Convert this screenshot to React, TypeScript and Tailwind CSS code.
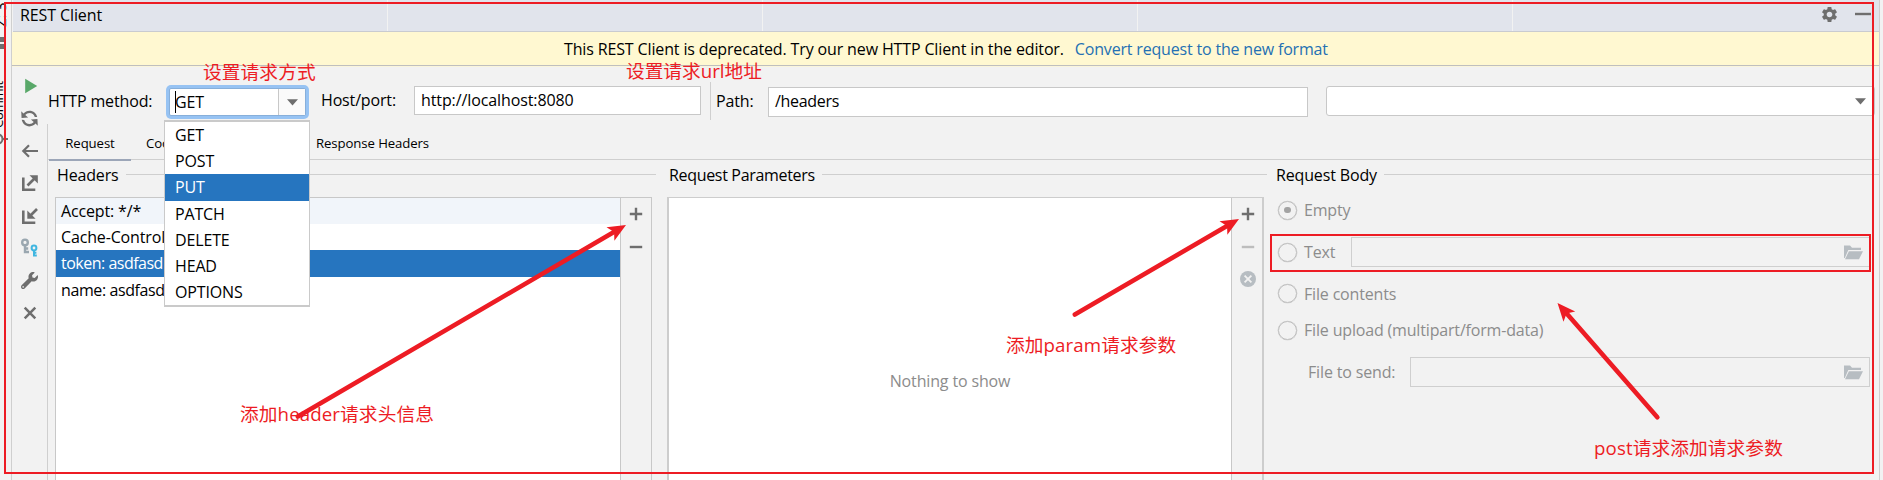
import type { ReactNode } from 'react';
import { MdSettings } from 'react-icons/md';
import { FaWrench } from 'react-icons/fa';

const METHODS = ['GET', 'POST', 'PUT', 'PATCH', 'DELETE', 'HEAD', 'OPTIONS'];

const HEADER_ROWS = [
  { text: 'Accept: */*', style: 'h-[26px] bg-[#f1f5fa]' },
  { text: 'Cache-Control', style: 'h-[26px]' },
  { text: 'token: asdfasd', style: 'h-[27px] bg-[#2675bf] pb-[2px] text-white tracking-[-0.5px]' },
  { text: 'name: asdfasd', style: 'h-[27px] pb-px tracking-[-0.4px]' },
];

function Arrow({ className = '' }: { className?: string }) {
  return (
    <svg className={`shrink-0 ${className}`} width="11" height="7" viewBox="0 0 11 7">
      <path d="M0 .3h11L5.5 6.6z" fill="#6e6e6e" />
    </svg>
  );
}

function ToolIcon({ children }: { children: ReactNode }) {
  return <div className="flex h-[32.5px] items-center justify-center">{children}</div>;
}

function Toolbar() {
  return (
    <div className="flex w-[35px] shrink-0 flex-col pt-[2.5px]">
      <ToolIcon>
        <svg width="20" height="20" viewBox="0 0 20 20"><path d="M5.2 2.8 17.2 10 5.2 17.2z" fill="#59a869" /></svg>
      </ToolIcon>
      <ToolIcon>
        <svg width="21" height="21" viewBox="0 0 16 16">
          <path
            fill="#6e6e6e"
            d="M12.57 11.89C11.47 13.18 9.83 14 8 14C5.04 14 2.58 11.86 2.09 9.04L3.95 9.11C4.43 10.89 6.06 12.2 8 12.2C9.3 12.2 10.46 11.61 11.23 10.68L9.05 8.71L14.04 8.45L14.3 13.44ZM3.43 4.12C4.53 2.82 6.17 2 8 2C10.92 2 13.35 4.09 13.89 6.85L12.02 6.79C11.5 5.06 9.9 3.8 8 3.8C6.7 3.8 5.54 4.39 4.77 5.32L6.95 7.29L1.96 7.55L1.7 2.56Z"
          />
        </svg>
      </ToolIcon>
      <ToolIcon>
        <svg width="20" height="20" viewBox="0 0 20 20" fill="none" stroke="#6e6e6e" strokeWidth="2.2">
          <path d="M18 10H3.5M9 4.3 3.3 10 9 15.7" />
        </svg>
      </ToolIcon>
      <ToolIcon>
        <svg width="20" height="20" viewBox="0 0 20 20" fill="none" stroke="#6e6e6e">
          <path d="M3.3 4.5v12.2h12" strokeWidth="2.6" />
          <path d="M7.5 12.5 15 5" strokeWidth="2.6" />
          <path d="M9.5 2.2h8.3v8.3z" fill="#6e6e6e" stroke="none" />
        </svg>
      </ToolIcon>
      <ToolIcon>
        <svg width="20" height="20" viewBox="0 0 20 20" fill="none" stroke="#6e6e6e">
          <path d="M3.3 4.5v12.2h12" strokeWidth="2.6" />
          <path d="M10 10 17 3" strokeWidth="2.6" />
          <path d="M7.3 4.5v8.3h8.3z" fill="#6e6e6e" stroke="none" />
        </svg>
      </ToolIcon>
      <ToolIcon>
        <svg width="20" height="20" viewBox="0 0 20 20" fill="none">
          <g stroke="#9aa7b0" strokeWidth="2.4">
            <circle cx="5" cy="4.4" r="2.8" />
            <path d="M5 7.2v8M5 10.5h3.2M5 14h4" />
          </g>
          <g stroke="#40b6e0" strokeWidth="2">
            <circle cx="14" cy="10" r="2.4" />
            <path d="M14 12.5v6M14 14.7h2.4M14 17.6h2.8" />
          </g>
        </svg>
      </ToolIcon>
      <ToolIcon>
        <FaWrench size={17} color="#6e6e6e" />
      </ToolIcon>
      <ToolIcon>
        <svg width="20" height="20" viewBox="0 0 20 20" fill="none" stroke="#6e6e6e" strokeWidth="2.5">
          <path d="M4.7 4.7 15.3 15.3M15.3 4.7 4.7 15.3" />
        </svg>
      </ToolIcon>
    </div>
  );
}

function Plus() {
  return (
    <svg width="14" height="14" viewBox="0 0 14 14" stroke="#6e6e6e" strokeWidth="2.4">
      <path d="M7 .8v12.4M.8 7h12.4" />
    </svg>
  );
}

function Minus({ color }: { color: string }) {
  return <svg width="14" height="14" viewBox="0 0 14 14"><path d="M.8 7h12.4" stroke={color} strokeWidth="2.4" /></svg>;
}

function GroupTitle({ title, className }: { title: string; className: string }) {
  return (
    <div className={`flex h-[30px] items-center ${className}`}>
      <span>{title}</span>
      <div className="mb-[1px] ml-[7px] h-px flex-1 bg-[#cfcfcf]" />
    </div>
  );
}

function Radio({ label, checked = false }: { label: string; checked?: boolean }) {
  return (
    <div className="flex items-center">
      <div className="flex size-[19px] shrink-0 items-center justify-center rounded-full border border-[#bdbdbd] ring-[0.3px] ring-[#c4c4c4]">
        {checked && <div className="size-[6.5px] rounded-full bg-[#a3a3a3]" />}
      </div>
      <span className="ml-[7px] tracking-[-0.17px]">{label}</span>
    </div>
  );
}

function FolderField({ className }: { className: string }) {
  return (
    <div className={`flex items-center justify-end border border-[#cfcfcf] pr-[6px] ${className}`}>
      <svg width="19" height="15" viewBox="0 0 19 15" fill="#b7bdc2">
        <path d="M0 13V.5h6l2 2.3h9V5H4.3L.8 13z" />
        <path d="M4.9 6.3H19L15 14.3H1z" />
      </svg>
    </div>
  );
}

function MethodCombo() {
  return (
    <div className="relative h-[34px] w-[143px] shrink-0 rounded-[5px] bg-[#97c3f3] p-[3px]">
      <div className="flex h-full rounded-[2px] border border-[#87afda] bg-white">
        <div className="flex flex-1 items-center pl-[5px]">
          <div className="h-[22px] w-px bg-black" />
          <span className="-ml-px">GET</span>
        </div>
        <div className="flex w-[27px] items-center border-l border-[#c8c8c8] bg-[#fafafa] pl-[8px]">
          <Arrow />
        </div>
      </div>
      <div className="absolute top-[35px] -left-[2px] z-10 w-[146px] border border-y-2 border-[#cacaca] bg-white">
        {METHODS.map((m) => (
          <div
            key={m}
            className={`flex h-[26.2px] items-center pl-[10px] ${m === 'PUT' ? 'bg-[#2675bf] text-white' : ''}`}
          >
            {m}
          </div>
        ))}
      </div>
    </div>
  );
}

function RequestBar() {
  return (
    <div className="flex h-[57px] items-start pt-[18px]">
      <div className="flex h-[32px] w-[119px] shrink-0 items-center pl-px">HTTP method:</div>
      <MethodCombo />
      <div className="flex h-[29px] w-[105px] shrink-0 items-center pl-[12px]">Host/port:</div>
      <div className="mt-px flex h-[29px] w-[287px] shrink-0 items-center border border-[#c8c8c8] bg-white pb-px pl-[6px] tracking-[-0.1px]">
        http://localhost:8080
      </div>
      <div className="-mt-[3px] ml-[9px] h-[38px] w-px bg-[#cfcfcf]" />
      <div className="flex h-[32px] w-[57px] shrink-0 items-center pl-[5px]">Path:</div>
      <div className="mt-[2px] flex h-[30px] w-[540px] shrink-0 items-center border border-[#c8c8c8] bg-white pb-[2px] pl-[6px] tracking-[-0.3px]">
        /headers
      </div>
      <div className="mt-px ml-[18px] flex h-[30px] w-[549px] shrink-0 items-center justify-end rounded-[3px] border border-[#c8c8c8] bg-white pr-[8px]">
        <Arrow />
      </div>
    </div>
  );
}

function Tabs() {
  return (
    <div className="flex h-[36px] border-b border-[#cfcfcf] pl-px text-[13.2px] tracking-[-0.1px]">
      <div className="relative flex h-[37px] w-[82px] items-center justify-center pt-px">
        Request
        <div className="absolute inset-x-0 bottom-0 h-[2px] bg-[#9ca6b8]" />
      </div>
      {/* The open method list covers the tabs between "Coo" and "Response Headers". */}
      <div className="flex h-[38px] w-[82px] shrink-0 items-center pl-[15px]">Coo</div>
      <div className="flex h-[38px] w-[88px] shrink-0" />
      <div className="flex h-[38px] w-[144px] shrink-0 items-center pl-[15px]">Response Headers</div>
    </div>
  );
}

function Panels() {
  return (
    <div className="flex flex-1">
      <div className="flex w-[619px] shrink-0 flex-col pl-[7px]">
        <GroupTitle title="Headers" className="mr-[11px] pl-[2px]" />
        <div className="mt-[7px] mr-[15px] flex flex-1 border-x border-t border-[#c8c8c8]">
          <div className="flex-1 bg-white">
            {HEADER_ROWS.map((r) => (
              <div key={r.text} className={`flex items-center pl-[5px] ${r.style}`}>{r.text}</div>
            ))}
          </div>
          <div className="flex w-[31px] flex-col items-center gap-[19px] border-l border-[#c8c8c8] pt-[9px]">
            <Plus />
            <Minus color="#6e6e6e" />
          </div>
        </div>
      </div>
      <div className="flex w-[603px] shrink-0 flex-col">
        <GroupTitle title="Request Parameters" className="mr-[3px] pl-[2px] tracking-[-0.32px]" />
        <div className="mt-[7px] mr-[6px] flex flex-1 border-x-2 border-t border-[#cdcdcd]">
          <div className="flex flex-1 justify-center bg-white pt-[173px] text-[#8c8c8c]">Nothing to show</div>
          <div className="flex w-[31px] flex-col items-center gap-[19px] border-l border-[#c8c8c8] pt-[9px] pl-[2px]">
            <Plus />
            <Minus color="#bdbdbd" />
            <svg className="-mt-[2px]" width="16" height="16" viewBox="0 0 16 16">
              <circle cx="8" cy="8" r="8" fill="#b7bdc2" />
              <path d="m4.6 4.6 6.8 6.8M11.4 4.6l-6.8 6.8" stroke="#f2f2f2" strokeWidth="1.8" />
            </svg>
          </div>
        </div>
      </div>
      <div className="flex flex-1 flex-col">
        <GroupTitle title="Request Body" className="pl-[6px]" />
        <div className="flex flex-col pr-[9px] pl-[8px] text-[#8c8c8c]">
          <div className="flex h-[40px] items-center"><Radio label="Empty" checked /></div>
          <div className="mt-px flex h-[42px] items-center">
            <div className="w-[73px]"><Radio label="Text" /></div>
            <FolderField className="h-[30px] flex-1" />
          </div>
          <div className="flex h-[41px] items-center"><Radio label="File contents" /></div>
          <div className="flex h-[32px] items-center"><Radio label="File upload (multipart/form-data)" /></div>
          <div className="mt-[6px] flex h-[40px] items-center">
            <span className="w-[132px] pl-[30px]">File to send:</span>
            <FolderField className="h-[30px] flex-1" />
          </div>
        </div>
      </div>
    </div>
  );
}

function Note({ className, children }: { className: string; children: ReactNode }) {
  return (
    <div
      className={`absolute text-[18.7px] leading-[24px] tracking-[0.1px] whitespace-nowrap text-[#ed1c24] [font-family:'Open_Sans','Noto_Sans_CJK_SC',sans-serif] ${className}`}
    >
      {children}
    </div>
  );
}

const ARROWS = [
  { from: [297, 417], to: [626, 225] },
  { from: [1074, 315], to: [1239, 219] },
  { from: [1658, 418], to: [1557.5, 303] },
];

function Annotations() {
  return (
    <div className="pointer-events-none absolute inset-0 z-20">
      <div className="absolute top-[2px] left-[4px] h-[472px] w-[1870px] border-2 border-[#ed1c24]" />
      <div className="absolute top-[234px] left-[1270px] h-[38px] w-[601px] border-2 border-[#ed1c24]" />
      <Note className="top-[60px] left-[203px]">设置请求方式</Note>
      <Note className="top-[59px] left-[626px] tracking-[0px]">设置请求url地址</Note>
      <Note className="top-[402px] left-[240px]">添加header请求头信息</Note>
      <Note className="top-[333px] left-[1006px]">添加param请求参数</Note>
      <Note className="top-[436px] left-[1594px]">post请求添加请求参数</Note>
      <svg className="absolute inset-0" width="1883" height="480" viewBox="0 0 1883 480" fill="#ed1c24">
        {ARROWS.map(({ from: [x1, y1], to: [x2, y2] }) => {
          const len = Math.hypot(x2 - x1, y2 - y1);
          const angle = (Math.atan2(y2 - y1, x2 - x1) * 180) / Math.PI;
          return (
            <g key={x1} transform={`translate(${x2} ${y2}) rotate(${angle})`}>
              <path d={`M-10 0H${-len + 1}`} stroke="#ed1c24" strokeWidth="4.6" strokeLinecap="round" />
              <path d="M0 0-18-7.8-13.8 0-18 7.8z" />
            </g>
          );
        })}
      </svg>
    </div>
  );
}

export default function App() {
  return (
    <div className="relative flex h-[480px] w-[1883px] overflow-hidden bg-[#f2f2f2] text-[16px] leading-[20px] tracking-[-0.15px] whitespace-nowrap text-black [font-family:'Open_Sans','Noto_Sans_CJK_SC',sans-serif]">
      <div className="flex w-[12px] shrink-0 flex-col overflow-hidden border-r border-[#cfcfcf] text-[15px]">
        <div className="-ml-[10px] flex h-[30px] w-[20px] rotate-180 justify-center [writing-mode:vertical-rl]">Z: 3</div>
        <svg className="mt-[7px]" width="6" height="12" viewBox="0 0 6 12" fill="#6e6e6e">
          <path d="M0 0h5v5H0zM0 7h5v5H0z" />
        </svg>
        <div className="mt-[29px] -ml-[12px] h-[50px] w-[20px] rotate-180 text-[13px] [writing-mode:vertical-rl]">Commit</div>
        <svg className="mt-[4px]" width="8" height="14" viewBox="0 0 8 14" fill="none" stroke="#6e6e6e" strokeWidth="2">
          <path d="M-2 2.5A4.5 4.5 0 0 1-2 11.5M3 7h5" />
        </svg>
      </div>
      <div className="flex w-[1868px] shrink-0 flex-col border-r border-[#cfcfcf]">
        <div className="ml-px flex h-[32px] shrink-0 border-b border-[#c9cbd0] bg-[#e1e4ec]">
          <div className="h-full w-[375px] border-r border-[#f2f2f2] pt-[5px] pl-[7px] tracking-[-0.1px]">REST Client</div>
          <div className="w-[375px] border-r border-[#f2f2f2]" />
          <div className="w-[375px] border-r border-[#f2f2f2]" />
          <div className="w-[375px] border-r border-[#f2f2f2]" />
          <div className="flex h-[28px] flex-1 items-center justify-end gap-[16px] pr-[8px]">
            <MdSettings size={19} color="#6e6e6e" />
            <svg width="16" height="16" viewBox="0 0 16 16"><path d="M0 8h16" stroke="#6e6e6e" strokeWidth="2.4" /></svg>
          </div>
        </div>
        <div className="flex h-[34px] shrink-0 items-center border-b border-[#bfbfbf] bg-[#fff8d1] pl-[552px]">
          <span className="tracking-[-0.14px]">This REST Client is deprecated. Try our new HTTP Client in the editor.</span>
          <span className="ml-[11px] tracking-[-0.18px] text-[#2470b3]">Convert request to the new format</span>
        </div>
        <div className="h-px shrink-0 bg-[#faf5dc]" />
        <div className="flex flex-1">
          <Toolbar />
          <div className="flex flex-1 flex-col">
            <RequestBar />
            <div className="flex flex-1 flex-col border-l border-[#cfcfcf]">
              <Tabs />
              <Panels />
            </div>
          </div>
        </div>
      </div>
      <Annotations />
    </div>
  );
}
